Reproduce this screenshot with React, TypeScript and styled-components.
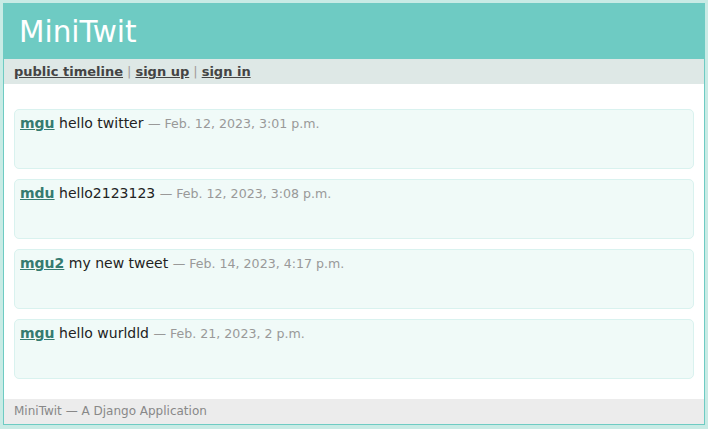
import React from "react";
import styled, { createGlobalStyle } from "styled-components";

const GlobalStyle = createGlobalStyle`
  html, body { margin: 0; padding: 0; }
  body {
    background: #c8ebe5;
    font-family: "DejaVu Sans", "Liberation Sans", sans-serif;
    font-size: 14px;
  }
`;

const Page = styled.div`
  width: 700px;
  margin: 3px auto;
  background: #ffffff;
  border: 1px solid #6ecbc3;
`;

const Header = styled.h1`
  margin: 0;
  padding: 11px 15px 9px;
  background: #6ecbc3;
  color: #ffffff;
  font-size: 29.5px;
  font-weight: normal;
  line-height: 35px;
`;

const Nav = styled.nav`
  background: #dee8e6;
  padding: 5px 10px;
  font-size: 13px;
  line-height: 15px;
  color: #999;
`;

const NavLink = styled.a`
  color: #444;
  font-weight: bold;
  text-decoration: underline;
`;

const Sep = styled.span`
  color: #a29a9a;
  margin: 0 4px;
`;

const Body = styled.main`
  padding: 25px 10px 10px;
`;

const Messages = styled.ul`
  list-style: none;
  margin: 0;
  padding: 0;
`;

const Message = styled.li`
  margin: 10px 0;
  &:first-child { margin-top: 0; }
  padding: 5px;
  min-height: 48px;
  box-sizing: content-box;
  background: #f0faf8;
  border: 1px solid #d9f2ef;
  border-radius: 5px;
  color: #222;
  line-height: normal;
`;

const Text = styled.p`
  margin: 0;
`;

const User = styled.a`
  color: #357b70;
  font-weight: bold;
  text-decoration: underline;
`;

const Stamp = styled.small`
  font-size: 0.9em;
  color: #999;
`;

const Footer = styled.footer`
  background: #ececec;
  color: #888;
  padding: 5px 10px;
  font-size: 12px;
  line-height: 15px;
`;

const tweets = [
  { user: "mgu", text: "hello twitter", date: "Feb. 12, 2023, 3:01 p.m." },
  { user: "mdu", text: "hello2123123", date: "Feb. 12, 2023, 3:08 p.m." },
  { user: "mgu2", text: "my new tweet", date: "Feb. 14, 2023, 4:17 p.m." },
  { user: "mgu", text: "hello wurldld", date: "Feb. 21, 2023, 2 p.m." },
];

export default function App() {
  return (
    <>
      <GlobalStyle />
      <Page>
        <Header>MiniTwit</Header>
        <Nav>
          <NavLink href="#">public timeline</NavLink>
          <Sep>|</Sep>
          <NavLink href="#">sign up</NavLink>
          <Sep>|</Sep>
          <NavLink href="#">sign in</NavLink>
        </Nav>
        <Body>
          <Messages>
            {tweets.map((t, i) => (
              <Message key={i}>
                <Text>
                  <User href="#">{t.user}</User> {t.text}{" "}
                  <Stamp>— {t.date}</Stamp>
                </Text>
              </Message>
            ))}
          </Messages>
        </Body>
        <Footer>MiniTwit — A Django Application</Footer>
      </Page>
    </>
  );
}
